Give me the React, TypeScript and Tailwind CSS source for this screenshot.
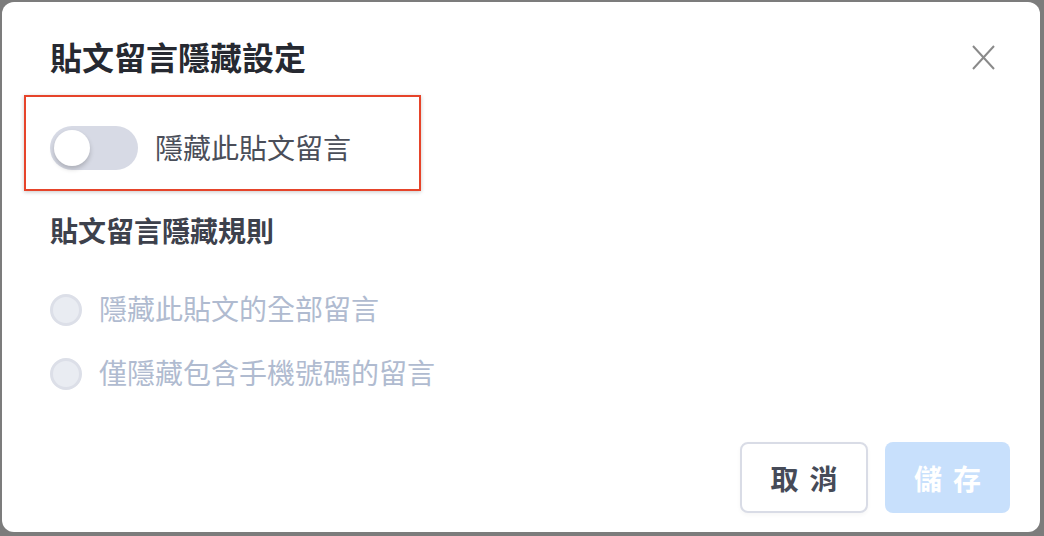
import { useState } from "react";

const font = { fontFamily: '"Noto Sans CJK TC", "Noto Sans", sans-serif' };

const rules = ["隱藏此貼文的全部留言", "僅隱藏包含手機號碼的留言"];

const App = () => {
  const [hidden, setHidden] = useState(false);

  return (
    <div
      className="h-[536px] w-[1044px] overflow-hidden bg-[#7c7c7c] pl-[2px] pt-[2px]"
      style={font}
    >
      <div className="flex h-[530px] w-[1038px] flex-col rounded-[12px] bg-white pl-[48px] pr-[30px]">
        {/* header */}
        <div className="mt-[35px] flex h-[40px] items-center justify-between pr-[15px]">
          <h2 className="pb-[2px] text-[32px] font-bold leading-[40px] text-[#262931]">
            貼文留言隱藏設定
          </h2>
          <button className="text-[#8a8a8a]">
            <svg width="23" height="25" viewBox="0 0 23 25" fill="none">
              <path d="M1 1L22 24M22 1L1 24" stroke="currentColor" strokeWidth="2" />
            </svg>
          </button>
        </div>

        {/* toggle, highlighted */}
        <div className="ml-[-26px] mt-[18px] flex w-[397px] items-center border-2 border-[#e6442a] pb-[19px] pl-[24px] pt-[29px] shadow-[0_1px_4px_rgba(0,0,0,0.22)]">
          <button
            onClick={() => setHidden(!hidden)}
            className={`relative h-[44px] w-[88px] rounded-full ${hidden ? "bg-[#3b82f6]" : "bg-[#d7dae5]"}`}
          >
            <span
              className={`absolute top-[4px] h-[36px] w-[36px] rounded-full bg-white shadow-[0_3px_5px_rgba(0,0,0,0.2)] ${hidden ? "left-[48px]" : "left-[4px]"}`}
            />
          </button>
          <span className="ml-[17px] pb-[3px] text-[28px] leading-[40px] text-[#4a4e59]">
            隱藏此貼文留言
          </span>
        </div>

        {/* rules */}
        <div className="mt-[21px] flex h-[40px] items-center pb-[4px] text-[28px] font-bold text-[#3d414c]">
          貼文留言隱藏規則
        </div>

        <div className="mt-[38px] flex flex-col gap-[24px]">
          {rules.map((rule) => (
            <label key={rule} className="flex h-[40px] items-center">
              <span className="h-[32px] w-[32px] rounded-full border-[3px] border-[#dcdfe8] bg-[#e9ecf2]" />
              <span className="ml-[17px] pb-[4px] text-[28px] leading-[40px] text-[#b0bbd0]">
                {rule}
              </span>
            </label>
          ))}
        </div>

        {/* footer */}
        <div className="mt-[48px] flex justify-end gap-[17px]">
          <button className="h-[71px] w-[128px] rounded-[8px] border-2 border-[#d9dce6] bg-white pl-[11px] text-[28px] font-bold tracking-[11px] text-[#464b58] shadow-[0_2px_4px_rgba(0,0,0,0.04)]">
            取消
          </button>
          <button className="h-[71px] w-[125px] rounded-[8px] bg-[#c8e0fc] pl-[11px] text-[28px] font-bold tracking-[11px] text-white">
            儲存
          </button>
        </div>
      </div>
    </div>
  );
};

export default App;
